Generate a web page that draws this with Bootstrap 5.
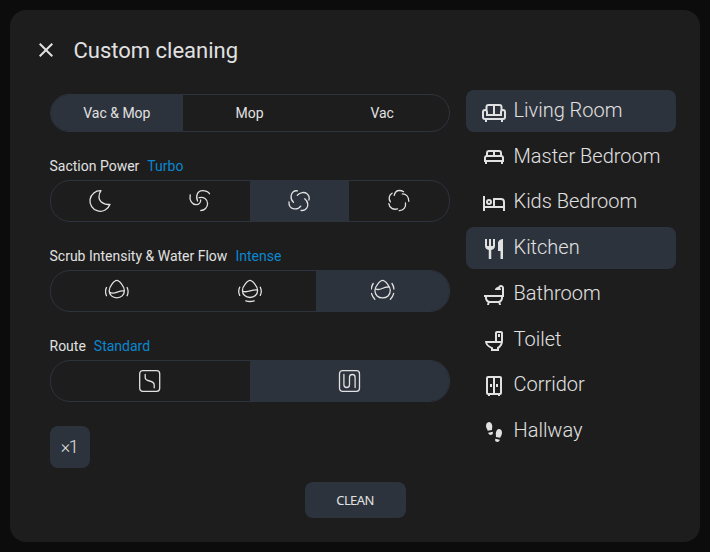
<!DOCTYPE html>
<html lang="en" data-bs-theme="dark">
<head>
<meta charset="utf-8">
<meta name="viewport" content="width=device-width, initial-scale=1">
<title>Custom cleaning</title>
<link href="https://cdn.jsdelivr.net/npm/bootstrap@5.3.0/dist/css/bootstrap.min.css" rel="stylesheet">
<style>
body{background:#0c0c0c;color:#e1e1e1;font-family:Roboto,sans-serif;font-size:14px;line-height:20px;padding:10px;overflow:hidden}
.dialog-panel{height:532px;background:#1d1d1d;border-radius:16px;padding:20px 24px 24px}
.dialog-head{height:40px}
.dialog-title{font-size:22px;line-height:40px;font-weight:400;color:#e1e1e1;padding:2px 0 0 15.5px}
.close-btn{width:24px;height:24px;color:inherit}
.options{width:400px;margin-left:15.5px;padding-top:24px}
.rooms{width:210px;margin-left:16.5px;padding-top:20px;gap:3.72px}
.segments{height:42px;border:1px solid #2d333c;border-radius:20px;overflow:hidden}
.segments.short{height:38px}
.segments .btn{flex:1 1 0;padding:0;border:0;border-radius:0;font-size:14px;line-height:20px;color:#e1e1e1}
.segments .btn.active,.repeat-btn,.clean-btn,.room.active{background:#2d333d;color:#e1e1e1}
.segments .btn.active .line{margin-left:1px}
.option-label{height:20px;margin-top:24px;margin-bottom:4px}
.option-label span{color:#0b87d0}
.repeat-btn{width:40px;height:42px;border:0;border-radius:8px;margin-top:24px;padding:0 1px 1px 0;font-size:18px;font-weight:300;letter-spacing:-1.5px}
.room{height:42px;flex:none;border:0;border-radius:8px;padding:0 0 2px 16px;font-size:20px;line-height:28px;font-weight:300;color:#e1e1e1}
.room svg{margin-top:4px}
.room span{padding-left:7.5px}
.clean-btn{width:101px;height:36px;border:0;border-radius:8px;font:13px "Noto Sans",sans-serif;letter-spacing:-.6px;margin-top:14px;padding:0}
.ico{width:24px;height:24px;flex:none;fill:currentColor}
.line{fill:none;stroke:currentColor;stroke-width:1.3;stroke-linecap:round;stroke-linejoin:round}
.bold-line{fill:none;stroke:currentColor;stroke-width:2}
</style>
<script src="https://cdn.jsdelivr.net/npm/bootstrap@5.3.0/dist/js/bootstrap.bundle.min.js"></script>
</head>
<body>
<main class="dialog-panel d-flex flex-column">
  <header class="dialog-head d-flex align-items-center">
    <button class="btn p-0 border-0 close-btn d-flex" aria-label="Close"><svg class="ico" viewBox="0 0 24 24"><path d="M19,6.41L17.59,5L12,10.59L6.41,5L5,6.41L10.59,12L5,17.59L6.41,19L12,13.41L17.59,19L19,17.59L13.41,12L19,6.41Z"/></svg></button>
    <h1 class="dialog-title m-0">Custom cleaning</h1>
  </header>
  <div class="d-flex">
    <section class="options">
      <div class="segments short d-flex">
        <button class="btn active">Vac &amp; Mop</button><button class="btn">Mop</button><button class="btn">Vac</button>
      </div>
      <div class="option-label d-flex gap-2">Saction Power <span>Turbo</span></div>
      <div class="segments d-flex">
        <button class="btn d-flex align-items-center justify-content-center" aria-label="Quiet"><svg class="ico line" viewBox="0 0 24 24"><path d="M13 1.7A10.3 10.3 0 1 0 22 15.3C17 16.3 11 13 11 8C11 5.5 11.7 3.3 13 1.7Z"/></svg></button>
        <button class="btn d-flex align-items-center justify-content-center" aria-label="Balanced"><svg class="ico line" viewBox="0 0 24 24"><path d="M2.2 6C1 11.5 4.3 15.7 8 15.7C11 15.7 12.7 13.7 12.7 11M9.6 12C7.3 7 9.5 1.7 14.5 1.7C17.5 1.7 20 2.7 21.5 4.7M11.2 8.7C15.5 7.2 19.6 10.5 19.6 14.5C19.6 18.5 16.5 21.5 12.8 21.5"/></svg></button>
        <button class="btn active d-flex align-items-center justify-content-center" aria-label="Turbo"><svg class="ico line" viewBox="0 0 24 24"><path d="M9.5 1.8C5.8 1.3 3.4 3.5 3.1 7C2.9 9.6 3.8 12 5.5 13.3M9.3 6.3C12.2 3.3 16.5 2.7 19 4.7C21 6.3 21.6 8.5 20.9 11M16.7 9.8C20 12.5 20.7 16.5 18.7 19.2C17.3 21.2 15.2 21.8 13 21.3M1 13C.6 16.5 2.6 19.3 6 19.8C8.8 20.2 11.4 19 12.7 17.1"/></svg></button>
        <button class="btn d-flex align-items-center justify-content-center" aria-label="Max"><svg class="ico line" viewBox="0 0 24 24"><path d="M7.2 6.4C8 3.2 9.8 1.5 12.3 1.5C14 1.5 15.5 1.9 16.6 2.7M15.3 4.9C19.2 4.9 21.8 7.8 21.8 12.3M18.5 14C19.2 18.3 16.6 21.7 12.2 21.7M10.6 19.8C6.5 21.2 2.3 18.8 1.8 14.7M3.4 12.9C1.2 9.7 2 6 5.1 4.2"/></svg></button>
      </div>
      <div class="option-label d-flex gap-2">Scrub Intensity &amp; Water Flow <span>Intense</span></div>
      <div class="segments d-flex">
        <button class="btn d-flex align-items-center justify-content-center" aria-label="Low"><svg class="ico line" viewBox="0 0 24 24"><path d="M11.8 1.4C9.5 1.4 4.2 7.3 4.2 11.8C4.2 16 7.6 18.8 11.8 18.8C16 18.8 19.4 16 19.4 11.8C19.4 7.3 14.1 1.4 11.8 1.4ZM4.3 13C9.5 17 13 10.8 19.3 12M1.5 8.5Q-.5 12.6 1.5 16.7M22.1 8.5Q24.1 12.6 22.1 16.7"/></svg></button>
        <button class="btn d-flex align-items-center justify-content-center" aria-label="Medium"><svg class="ico line" viewBox="0 0 24 24"><path d="M12 1.4C9.7 1.4 4.4 7.3 4.4 11.4C4.4 15.8 7.8 18.5 12 18.5C16.2 18.5 19.6 15.8 19.6 11.4C19.6 7.3 14.3 1.4 12 1.4ZM4.5 12C9.7 14.8 13 10 19.5 11M1.7 8.2Q-.3 12.3 1.7 16.4M22.3 8.2Q24.3 12.3 22.3 16.4M7.8 21.8Q12 23.2 16.2 21.8"/></svg></button>
        <button class="btn active d-flex align-items-center justify-content-center" aria-label="Intense"><svg class="ico line" viewBox="0 0 24 24"><path d="M11.6 1.4C9.3 1.4 3.9 7.3 3.9 11.6C3.9 16 7.3 18.9 11.6 18.9C15.9 18.9 19.3 16 19.3 11.6C19.3 7.3 13.9 1.4 11.6 1.4ZM4.5 9.7C9.3 13 12 6.7 18.4 8.2M2.2 4.5Q.5 6.8 .3 10M.5 14.4Q1.4 18 3.8 20.2M21 4.5Q22.7 6.8 22.9 10M22.7 14.4Q21.8 18 19.4 20.2"/></svg></button>
      </div>
      <div class="option-label d-flex gap-2">Route <span>Standard</span></div>
      <div class="segments d-flex">
        <button class="btn d-flex align-items-center justify-content-center" aria-label="Quick"><svg class="ico line" viewBox="0 0 24 24"><rect x="1.7" y="1.7" width="20" height="20.6" rx="3"/><path d="M7.2 5.5V8.5C7.2 10.8 8.5 11.3 11.5 12C15 12.8 16.2 13.5 16.2 16V18.8"/></svg></button>
        <button class="btn active d-flex align-items-center justify-content-center" aria-label="Standard"><svg class="ico line" viewBox="0 0 24 24"><rect x="1.5" y="1.7" width="20" height="20.6" rx="3"/><path d="M5.9 5.5V15.7A2.8 2.8 0 0 0 11.5 15.7V8.3A2.8 2.8 0 0 1 17.1 8.3V18.5"/></svg></button>
      </div>
      <button class="btn repeat-btn d-block">×1</button>
    </section>
    <nav class="rooms d-flex flex-column">
      <button class="btn room active d-flex align-items-center"><svg class="ico bold-line" viewBox="0 0 24 24"><path d="M4.5 10V7a2 2 0 0 1 2-2h11a2 2 0 0 1 2 2v3M12 5v10M3 10a2 2 0 0 1 2 2v3h14v-3a2 2 0 0 1 4 0v5a2 2 0 0 1-2 2H3a2 2 0 0 1-2-2v-5a2 2 0 0 1 2-2zM4 19v3M20 19v3"/></svg><span>Living Room</span></button>
      <button class="btn room d-flex align-items-center"><svg class="ico bold-line" viewBox="0 0 24 24"><path d="M5 10V7a2 2 0 0 1 2-2h10a2 2 0 0 1 2 2v3M12 5v5M5 10h14a2 2 0 0 1 2 2v3H3v-3a2 2 0 0 1 2-2zM4 15v3M20 15v3"/></svg><span>Master Bedroom</span></button>
      <button class="btn room d-flex align-items-center"><svg class="ico" viewBox="0 0 24 24"><path d="M7,14A3,3 0 0,0 10,11A3,3 0 0,0 7,8A3,3 0 0,0 4,11A3,3 0 0,0 7,14M7,10A1,1 0 0,1 8,11A1,1 0 0,1 7,12A1,1 0 0,1 6,11A1,1 0 0,1 7,10M19,7H11V15H3V5H1V20H3V17H21V20H23V11A4,4 0 0,0 19,7M21,15H13V9H19A2,2 0 0,1 21,11V15Z"/></svg><span>Kids Bedroom</span></button>
      <button class="btn room active d-flex align-items-center"><svg class="ico" viewBox="0 0 24 24"><path d="M11,9H9V2H7V9H5V2H3V9C3,11.12 4.66,12.84 6.75,12.97V22H9.25V12.97C11.34,12.84 13,11.12 13,9V2H11V9M16,6V14H18.5V22H21V2C18.24,2 16,4.24 16,6Z"/></svg><span>Kitchen</span></button>
      <button class="btn room d-flex align-items-center"><svg class="ico" viewBox="0 0 24 24"><path d="M21 14V15C21 16.91 19.93 18.57 18.35 19.41L19 22H17L16.5 20H7.5L7 22H5L5.65 19.41C4.07 18.57 3 16.91 3 15V14H2V12H20V5C20 4.45 19.55 4 19 4C18.5 4 18.12 4.34 18 4.79C18.63 5.33 19 6.13 19 7H13C13 5.34 14.34 4 16 4H16.17C16.58 2.84 17.69 2 19 2C20.66 2 22 3.34 22 5V14H21M19 14H5V15C5 16.66 6.34 18 8 18H16C17.66 18 19 16.66 19 15V14Z"/></svg><span>Bathroom</span></button>
      <button class="btn room d-flex align-items-center"><svg class="ico" viewBox="0 0 24 24"><path fill-rule="evenodd" d="M9 22H17V19.5C19.41 17.87 21 15.12 21 12V4C21 2.9 20.1 2 19 2H15C13.9 2 13 2.9 13 4V12H3C3 15.09 5 17.97 9 19.5V22M5.29 14H18.71C18.14 15.91 16.77 17.5 15 18.33V20H11V18.33C9 18 5.86 16 5.29 14M15 4H19V12H15V4M16 5V8H18V5H16Z"/></svg><span>Toilet</span></button>
      <button class="btn room d-flex align-items-center"><svg class="ico" viewBox="0 0 24 24"><path fill-rule="evenodd" d="M6 2H18A2 2 0 0 1 20 4V19A2 2 0 0 1 18 21V22H16V21H8V22H6V21A2 2 0 0 1 4 19V4A2 2 0 0 1 6 2M6 4V19H11V4H6M13 4V19H18V4H13M8 10H10V13H8V10M14 10H16V13H14V10Z"/></svg><span>Corridor</span></button>
      <button class="btn room d-flex align-items-center"><svg class="ico" viewBox="0 0 24 24"><path d="M7 2C9 1.8 10.3 4.3 10.3 6.5C10.3 7.8 9.8 9 10 10L5.7 10.8C5.3 9 4 7.8 4 6C4 3.7 5 2.2 7 2ZM6.2 12.8L10.7 11.7C11.2 13.2 10.8 14.4 9.5 14.8C7.8 15.3 6.6 14.4 6.2 12.8ZM17.3 9C19.2 9.2 20.2 11 20 13.3C19.8 15.2 18.7 16.3 18.2 17.8L13.9 16.9C14.2 15.8 13.7 14.8 13.8 13.3C14 11 15.4 8.8 17.3 9ZM13.3 18.7L17.8 19.8C17.4 21.4 16.2 22.3 14.5 21.8C13.2 21.4 12.8 20.2 13.3 18.7Z"/></svg><span>Hallway</span></button>
    </nav>
  </div>
  <footer class="d-flex justify-content-center"><button class="btn clean-btn">CLEAN</button></footer>
</main>
</body>
</html>
